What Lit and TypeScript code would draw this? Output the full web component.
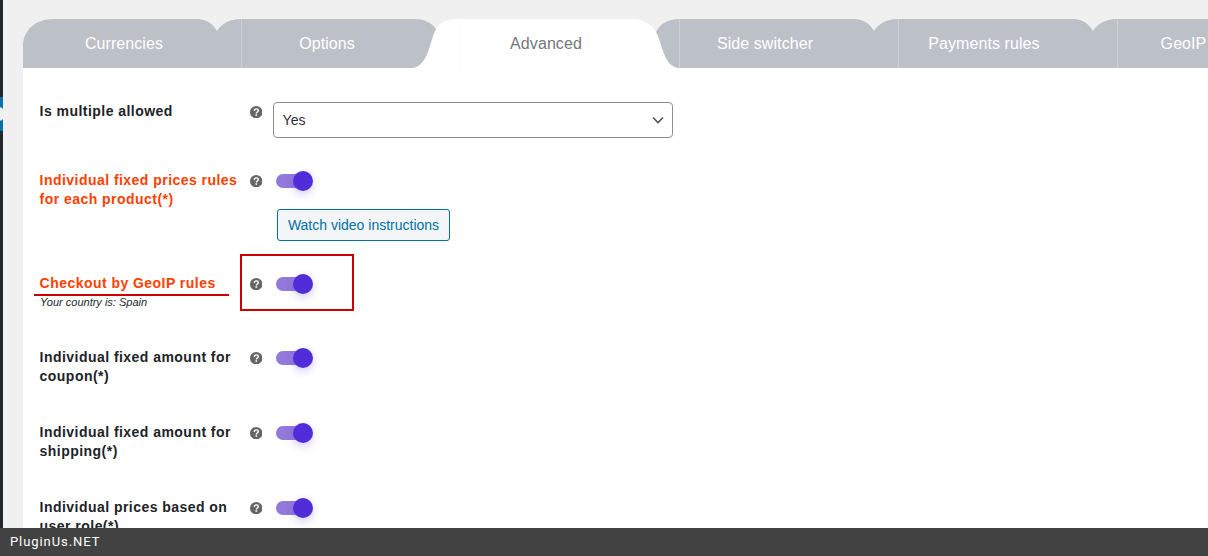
import { LitElement, html, css, svg } from "lit";
import { customElement } from "lit/decorators.js";

const TABS = [
  { label: "Currencies", w: 218, pad: 16 },
  { label: "Options", w: 219, pad: 47 },
  { label: "Advanced", w: 219, pad: 47, active: true },
  { label: "Side switcher", w: 219, pad: 47 },
  { label: "Payments rules", w: 219, pad: 47 },
  { label: "GeoIP", w: 219, pad: 86 },
];

const notch = (d: number) =>
  `L${d - 44} 19 C${d - 34} 19 ${d - 28} 24 ${d - 24} 31 C${d - 20} 24 ${d - 12} 19 ${d} 19 `;

const GRAY =
  "M23 68 L23 46 C23 30 36 19 53 19 " +
  notch(241) +
  "L413 19 C424 19 431 22 436 29 L450 40 L640 40 L656 32 C660 24 668 19 679 19 " +
  notch(898) +
  notch(1117) +
  "L1208 19 L1208 68 Z";

const WHITE =
  "M411 68 C420 68 426 60 430 46 C433 36 435 30 438 26 C442 21 449 19 460 19 L630 19 C642 19 651 23 656 32 C660 40 661 46 663 51 C666 60 671 68 679 68 Z";

interface Row {
  label: string;
  red?: boolean;
  kind: "select" | "toggle" | "button";
  sub?: string;
  cls: string;
}

const ROWS: Row[] = [
  { label: "Is multiple allowed", kind: "select", cls: "r1" },
  { label: "Individual fixed prices rules for each product(*)", red: true, kind: "button", cls: "r2" },
  { label: "Checkout by GeoIP rules", red: true, kind: "toggle", sub: "Your country is: Spain", cls: "r3" },
  { label: "Individual fixed amount for coupon(*)", kind: "toggle", cls: "r4" },
  { label: "Individual fixed amount for shipping(*)", kind: "toggle", cls: "r4" },
  { label: "Individual prices based on user role(*)", kind: "toggle", cls: "r4" },
];

@customElement("app-root")
export class AppRoot extends LitElement {
  static styles = css`
    :host {
      display: block;
      width: 1208px;
      height: 556px;
      overflow: hidden;
      position: relative;
      background: #f0f0f1;
      font-family: "Liberation Sans", Arial, sans-serif;
    }
    .shell { display: flex; flex-direction: column; height: 556px; }
    .body { flex: 1; display: flex; min-height: 0; overflow: hidden; }
    .adminbar { width: 3px; flex: none; background: #23282d; display: flex; flex-direction: column; }
    .adminbar .sp1 { height: 97px; flex: none; }
    .adminbar .cur { height: 34px; flex: none; background: #0073aa; position: relative; overflow: hidden; }
    .adminbar .cur i { position: absolute; left: -4px; top: 12px; width: 10px; height: 10px; background: #f0f0f1; transform: rotate(45deg); }
    .main { flex: 1; padding: 19px 0 0 20px; min-width: 0; display: flex; flex-direction: column; }
    .tabs { position: relative; height: 49px; display: flex; flex: none; }
    .tabs svg { position: absolute; left: 0; top: 0; }
    .tab {
      position: relative;
      flex: none;
      height: 49px;
      line-height: 49px;
      box-sizing: border-box;
      text-align: center;
      font-size: 16px;
      letter-spacing: 0.08px;
      color: #fff;
      white-space: nowrap;
    }
    .tab.active { color: #74777b; }
    .content { flex: 1; background: #fff; padding: 34px 0 0 16.6px; display: flex; flex-direction: column; gap: 33px; min-height: 0; }
    .row { display: grid; grid-template-columns: 210.4px 24px 1fr; flex: none; }
    .r1 { min-height: 36px; }
    .r2 { min-height: 70px; }
    .r3 { min-height: 41px; }
    .r4 { min-height: 42px; }
    .label { font-size: 14px; font-weight: 700; line-height: 19px; color: #1d2327; letter-spacing: 0.46px; }
    .red { color: #ff4000; }
    .sub { font-size: 11px; font-style: italic; font-weight: 400; line-height: 12px; letter-spacing: 0; color: #23282d; margin: 3px 0 0 0.5px; }
    .help { padding-top: 3.5px; height: 12px; }
    .help svg { display: block; }
    .control { display: flex; flex-direction: column; align-items: flex-start; }
    .select {
      box-sizing: border-box;
      width: 400px;
      height: 36px;
      border: 1px solid #8c8f94;
      border-radius: 4px;
      background: #fff;
      color: #2c3338;
      font-size: 14px;
      display: flex;
      align-items: center;
      justify-content: space-between;
      padding: 0 8px 0 8.6px;
      margin-left: -1px;
    }
    .toggle { position: relative; width: 37px; height: 20px; margin: 0 0 0 2px; flex: none; }
    .track { position: absolute; left: 0; top: 3px; width: 34px; height: 14px; border-radius: 7px; background: #9379db; }
    .thumb { position: absolute; right: 0; top: 0; width: 20px; height: 20px; border-radius: 50%; background: #512dd9; box-shadow: 0 3px 8px rgba(81, 45, 217, 0.25); }
    .btn {
      box-sizing: border-box;
      margin: 18px 0 0 3px;
      width: 173px;
      height: 32px;
      border: 1px solid #0071a1;
      border-radius: 3px;
      background: #f3f5f6;
      color: #0071a1;
      font-size: 14px;
      line-height: 30px;
      text-align: center;
      white-space: nowrap;
    }
    .footer {
      flex: none;
      height: 28px;
      background: #424242;
      color: #fff;
      font-family: Roboto, sans-serif;
      font-size: 13px;
      letter-spacing: 0.92px;
      line-height: 28px;
      padding-left: 10px;
    }
    .anno-box { position: absolute; left: 240px; top: 254px; width: 114px; height: 57px; box-sizing: border-box; border: 2px solid #cc0000; }
    .anno-line { position: absolute; left: 34px; top: 294px; width: 195px; height: 2px; background: #cc0000; }
  `;

  private help() {
    return html`<div class="help"><svg width="12.4" height="12.4" viewBox="0 0 12 12">
      <circle cx="6" cy="6" r="6" fill="#666"></circle>
      <path d="M4.1 4.7C4.2 3.5 5 2.8 6.1 2.8S8 3.5 8 4.5C8 5.8 6.2 5.8 6.1 7.2" fill="none" stroke="#fff" stroke-width="1.4"></path>
      <rect x="5.3" y="8" width="1.6" height="1.5" fill="#fff"></rect>
    </svg></div>`;
  }

  private toggle() {
    return html`<div class="toggle"><div class="track"></div><div class="thumb"></div></div>`;
  }

  private control(r: Row) {
    if (r.kind === "select") {
      return html`<div class="select"><span>Yes</span>
        <svg width="12" height="8" viewBox="0 0 12 8"><path d="M1 1.5L6 6.5L11 1.5" fill="none" stroke="#50575e" stroke-width="1.6"></path></svg>
      </div>`;
    }
    if (r.kind === "button") {
      return html`${this.toggle()}<div class="btn">Watch video instructions</div>`;
    }
    return this.toggle();
  }

  render() {
    return html`<div class="shell">
      <div class="body">
        <div class="adminbar"><div class="sp1"></div><div class="cur"><i></i></div></div>
        <div class="main">
          <div class="tabs">
            <svg width="1185" height="49" viewBox="23 19 1185 49">
              <path d="${GRAY}" fill="#bcc1c7"></path>
              ${[241, 898, 1117].map((x) => svg`<rect x="${x}" y="19" width="1" height="49" fill="#cdd1d5"></rect>`)}
              <path d="${WHITE}" fill="#fff"></path>
              <rect x="460" y="19" width="1" height="49" fill="#fbfbfb"></rect>
              <rect x="679" y="19" width="1" height="49" fill="#cdd1d5"></rect>
            </svg>
            ${TABS.map(
              (t) => html`<div class="tab ${t.active ? "active" : ""}" style="width:${t.w}px;padding-right:${t.pad}px">${t.label}</div>`
            )}
          </div>
          <div class="content">
            ${ROWS.map(
              (r) => html`<div class="row ${r.cls}">
                <div class="label ${r.red ? "red" : ""}">${r.label}${r.sub ? html`<div class="sub">${r.sub}</div>` : ""}</div>
                ${this.help()}
                <div class="control">${this.control(r)}</div>
              </div>`
            )}
          </div>
        </div>
      </div>
      <div class="footer">PluginUs.NET</div>
      <div class="anno-box"></div>
      <div class="anno-line"></div>
    </div>`;
  }
}
